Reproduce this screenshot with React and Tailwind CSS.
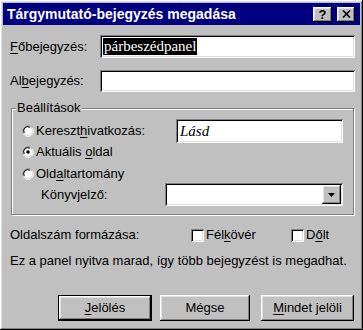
import React from 'react';

const RAISED =
  'shadow-[inset_-1px_-1px_#000,inset_1px_1px_#fff,inset_-2px_-2px_#808080,inset_2px_2px_#dfdfdf]';
const SUNKEN =
  'shadow-[inset_1px_1px_#808080,inset_-1px_-1px_#fff,inset_2px_2px_#000,inset_-2px_-2px_#dfdfdf]';

const Radio = ({ checked }) => (
  <svg width="12" height="12" viewBox="0 0 12 12" className="shrink-0">
    <path d="M8 1.2 A5.3 5.3 0 0 0 1.2 8" fill="none" stroke="#808080" strokeWidth="1" />
    <path d="M1.6 9 A5.3 5.3 0 0 0 10.4 3" fill="none" stroke="#fff" strokeWidth="1" />
    <circle cx="6" cy="6" r="4.3" fill="#fff" />
    <path d="M7.8 2.3 A4 4 0 0 0 2.3 7.8" fill="none" stroke="#000" strokeWidth="1" />
    {checked && <circle cx="6" cy="6" r="1.8" fill="#000" />}
  </svg>
);

const Checkbox = () => <span className={`w-[13px] h-[13px] bg-white shrink-0 ${SUNKEN}`} />;

const U = ({ children }) => <span className="underline underline-offset-2">{children}</span>;

const Button = ({ children, width, isDefault }) => (
  <div
    className={`h-[26px] flex items-center justify-center bg-[#c0c0c0] ${
      isDefault ? 'border border-black' : ''
    }`}
    style={{ width }}
  >
    <div className={`w-full h-full flex items-center justify-center ${RAISED}`}>{children}</div>
  </div>
);

export default function App() {
  return (
    <div
      className={`w-[363px] h-[330px] bg-[#c0c0c0] p-[3px] flex flex-col text-[13px] text-black ${RAISED}`}
      style={{ fontFamily: '"Liberation Sans", Arial, sans-serif' }}
    >
      {/* Title bar */}
      <div className="h-[22px] bg-[#000080] flex items-center pl-[4px] pr-[5px] shrink-0">
        <span className="text-white font-bold text-[14px] leading-none">
          Tárgymutató-bejegyzés megadása
        </span>
        <div className="ml-auto flex gap-[5px]">
          <div className={`w-[19px] h-[15px] bg-[#c0c0c0] flex items-center justify-center ${RAISED}`}>
            <span className="font-bold text-[13px] leading-none">?</span>
          </div>
          <div className={`w-[18px] h-[15px] bg-[#c0c0c0] flex items-center justify-center ${RAISED}`}>
            <svg width="9" height="8" viewBox="0 0 9 8">
              <path d="M1 0.5 L8 7.5 M8 0.5 L1 7.5" stroke="#000" strokeWidth="1.6" />
            </svg>
          </div>
        </div>
      </div>

      <div className="flex flex-col pl-[7px] pr-[5px]">
        {/* Main entry */}
        <div className="flex items-center mt-[10px] h-[23px]">
          <span className="w-[90px]">
            <U>F</U>őbejegyzés:
          </span>
          <div className={`flex-1 h-full bg-white flex items-center pl-[3px] ${SUNKEN}`}>
            <span
              className="bg-black text-white text-[15px] leading-[17px] px-px"
              style={{ fontFamily: '"Liberation Serif", "Times New Roman", serif' }}
            >
              párbeszédpanel
            </span>
          </div>
        </div>

        {/* Sub entry */}
        <div className="flex items-center mt-[12px] h-[22px]">
          <span className="w-[90px]">
            Al<U>b</U>ejegyzés:
          </span>
          <div className={`flex-1 h-full bg-white ${SUNKEN}`} />
        </div>

        {/* Options group */}
        <div className="relative mt-[16px] mx-px h-[107px] border border-[#808080] shadow-[inset_1px_1px_#fff,1px_1px_#fff]">
          <span className="absolute left-[4px] top-[-9px] px-px bg-[#c0c0c0] leading-[16px]">
            Beállítások
          </span>
          <div className="flex flex-col pl-[10px] pr-[10px] pt-[10px]">
            <div className="flex items-center h-[24px]">
              <Radio />
              <span className="ml-[2px]">
                Kereszt<U>h</U>ivatkozás:
              </span>
              <div
                className={`ml-auto w-[167px] h-full bg-white flex items-center pl-[4px] ${SUNKEN}`}
              >
                <span
                  className="italic text-[15px]"
                  style={{ fontFamily: '"Liberation Serif", "Times New Roman", serif' }}
                >
                  Lásd
                </span>
              </div>
            </div>
            <div className="flex items-center h-[16px] mt-[1px]">
              <Radio checked />
              <span className="ml-[2px]">
                Aktuális <U>o</U>ldal
              </span>
            </div>
            <div className="flex items-center h-[16px] mt-[6px]">
              <Radio />
              <span className="ml-[2px]">
                Old<U>a</U>ltartomány
              </span>
            </div>
            <div className="flex items-center h-[23px] mt-[1px]">
              <span className="ml-[19px]">Könyvjelző:</span>
              <div className={`ml-auto w-[178px] h-full bg-white flex justify-end p-[2px] ${SUNKEN}`}>
                <div className={`w-[19px] h-full bg-[#c0c0c0] flex items-center justify-center ${RAISED}`}>
                  <svg width="7" height="4" viewBox="0 0 7 4">
                    <path d="M0 0 H7 L3.5 4 Z" fill="#000" />
                  </svg>
                </div>
              </div>
            </div>
          </div>
        </div>

        {/* Page number format */}
        <div className="flex items-center h-[16px] mt-[12px]">
          <span className="w-[181px]">Oldalszám formázása:</span>
          <div className="flex items-center w-[100px]">
            <Checkbox />
            <span className="ml-[2px]">
              Fél<U>k</U>övér
            </span>
          </div>
          <div className="flex items-center">
            <Checkbox />
            <span className="ml-[2px]">
              D<U>ő</U>lt
            </span>
          </div>
        </div>

        <p className="mt-[10px] leading-[16px]">
          Ez a panel nyitva marad, így több bejegyzést is megadhat.
        </p>

        {/* Buttons */}
        <div className="flex justify-end mt-[26px] pr-px">
          <Button width={94} isDefault>
            <span>
              <U>J</U>elölés
            </span>
          </Button>
          <div className="w-[8px]" />
          <Button width={90}>Mégse</Button>
          <div className="w-[11px]" />
          <Button width={93}>
            <span>
              <U>M</U>indet jelöli
            </span>
          </Button>
        </div>
      </div>
    </div>
  );
}
